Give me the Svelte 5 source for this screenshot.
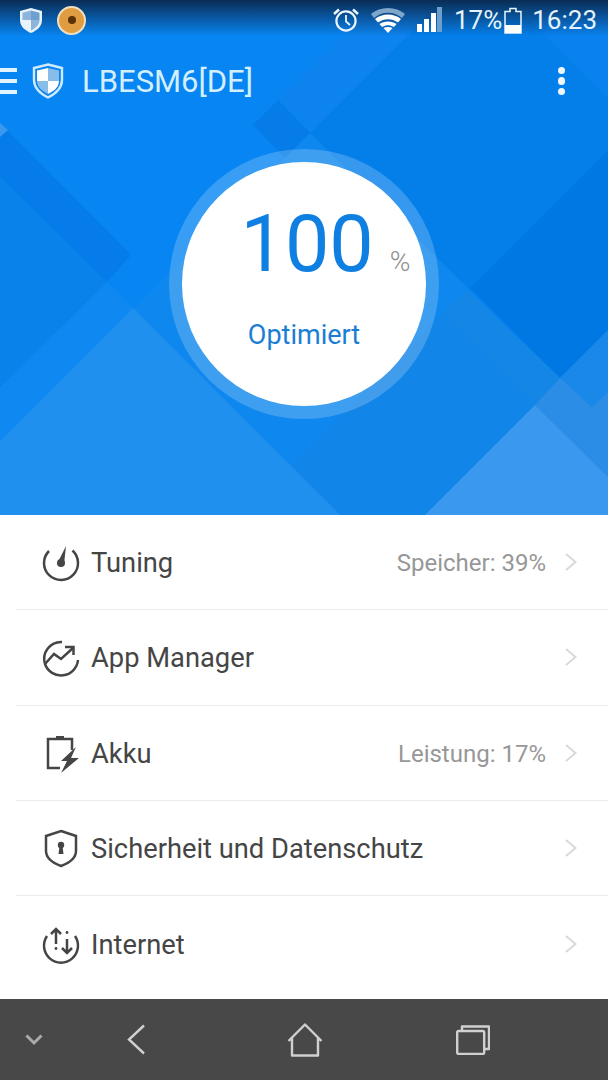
<script>
  const rows = [
    { icon: 'tuning', label: 'Tuning', value: 'Speicher: 39%' },
    { icon: 'apps', label: 'App Manager', value: '' },
    { icon: 'battery', label: 'Akku', value: 'Leistung: 17%' },
    { icon: 'shield', label: 'Sicherheit und Datenschutz', value: '' },
    { icon: 'net', label: 'Internet', value: '' }
  ]

  // background facets of the hero, painted in order
  const facets = [
    ['310,133 443,0 608,0 608,330 560,378', '#047fea'],
    ['470,288 608,150 608,330 560,378', '#0078e3'],
    ['510,0 608,0 608,98', '#0982ef'],
    ['310,133 608,426 608,515 0,515 0,443', '#0e87ee'],
    ['468,290 560,378 535,405 443,313', '#1487e6'],
    ['443,313 535,405 425,515 242,515', '#1285e8'],
    ['289,465 240,515 340,515', '#188aeb'],
    ['133,308 340,515 0,515 0,441', '#2090ef'],
    ['0,387 107,282 133,308 0,441', '#0f89f1'],
    ['0,177 107,282 0,387', '#0983ea'],
    ['7,130 131,255 107,282 0,177 0,123', '#057cea'],
    ['0,123 8,130 0,137', '#3a98ee'],
    ['278,100 310,133 443,0 378,0', '#0c83ee'],
    ['253,125 278,100 310,133 285,158', '#057ce8'],
    ['560,378 608,330 608,392 592,407', '#1a88e8'],
    ['560,378 592,407 608,392 608,477 535,405', '#2b8de6'],
    ['535,405 608,477 608,515 425,515', '#3a98ee']
  ]
</script>

<div class="screen">
  <section class="hero">
    <svg class="facets" width="608" height="515" viewBox="0 0 608 515">
      {#each facets as facet}
        <polygon points={facet[0]} fill={facet[1]} />
      {/each}
    </svg>
    <div class="shade"></div>

    <div class="status">
      <svg class="sShield" width="24" height="27" viewBox="0 0 24 27">
        <path d="M12 1 L23 4 V13 C23 20 17 24 12 26 C7 24 1 20 1 13 V4 Z" fill="#e6f3fb" />
        <path d="M12 3.500 L20.500 5.800 V13 H12 Z" fill="#6d9fd0" />
        <path d="M3.500 5.800 L12 3.500 V13 H3.500 Z" fill="#8db4da" />
        <path d="M3.500 13 H12 V23.500 C8 21.500 3.500 18 3.500 13 Z" fill="#eaf3fa" />
        <path d="M12 13 H20.500 C20.500 18 16 21.500 12 23.500 Z" fill="#8db4da" />
      </svg>
      <div class="coin"><span class="coinHole"></span></div>
      <div class="spacer"></div>
      <svg class="alarm" width="28" height="26" viewBox="0 0 28 26" fill="none" stroke="#eaf5fc">
        <circle cx="14" cy="14" r="9.6" stroke-width="2.2" />
        <path d="M14 8 V14.5 L18 18" stroke-width="1.8" />
        <path d="M2 7 L7 2.5 M26 7 L21 2.5" stroke-width="2.6" />
      </svg>
      <svg class="wifi" width="34" height="26" viewBox="0 0 34 26">
        <path d="M0 7 C9 -1 25 -1 34 7 L31 11 C23 4 11 4 3 11 Z" fill="#7fa5c8" />
        <path d="M4 12 C11 6 23 6 30 12 L27 15.500 C21 11 13 11 7 15.500 Z" fill="#fff" />
        <path d="M8.500 17 C13 13.500 21 13.500 25.500 17 L23 20 C19 17.500 15 17.500 11 20 Z" fill="#fff" />
        <path d="M12.500 21 C15 19.500 19 19.500 21.500 21 L17 26 Z" fill="#fff" />
      </svg>
      <svg class="signal" width="26" height="26" viewBox="0 0 26 26">
        <rect x="1" y="17" width="5" height="8" fill="#fff" />
        <rect x="8" y="12" width="5" height="13" fill="#fff" />
        <rect x="15" y="6" width="5" height="19" fill="#fff" />
        <rect x="21" y="0" width="5" height="25" fill="#6e9fcb" />
      </svg>
      <span class="pct">17%</span>
      <svg class="batt" width="18" height="27" viewBox="0 0 18 27">
        <path d="M1 4.500 H6 V1.500 H12 V4.500 H17 V26 H1 Z" fill="none" stroke="#eaf5fc" stroke-width="1.500" />
        <rect x="1" y="18" width="16" height="8" fill="#fff" />
      </svg>
      <span class="time">16:23</span>
    </div>

    <div class="toolbar">
      <div class="burger"><i></i><i></i><i></i></div>
      <svg class="tShield" width="32" height="36" viewBox="0 0 32 36">
        <path d="M16 1.500 L30 5 V17 C30 26 23 31 16 34.500 C9 31 2 26 2 17 V5 Z" fill="#0a84ee" stroke="#cdeaff" stroke-width="2.400" />
        <path d="M16 5 L27 7.500 V18 H16 Z" fill="#87bde8" />
        <path d="M5 18 H16 V31 C10 28 5 24 5 18 Z" fill="#87bde8" />
        <path d="M5 7.500 L16 5 V18 H5 Z" fill="#fff" />
        <path d="M16 18 H27 C27 24 22 28 16 31 Z" fill="#fff" />
      </svg>
      <span class="title">LBESM6[DE]</span>
      <div class="spacer"></div>
      <div class="dots"><i></i><i></i><i></i></div>
    </div>

    <div class="ring">
      <div class="disc">
        <div class="score"><span class="num">100</span><span class="unit">%</span></div>
        <div class="state">Optimiert</div>
      </div>
    </div>
  </section>

  <ul class="list">
    {#each rows as row}
      <li class="row">
        <svg class="rowIcon" width="40" height="40" viewBox="-20 -20 40 40" fill="none" stroke="#454545" stroke-width="2.500">
          {#if row.icon === 'tuning'}
            <path d="M-12 -12 A17 17 0 1 0 11.500 -12.500" />
            <circle cx="0" cy="0" r="4" fill="#454545" stroke="none" />
            <polygon points="-3,-1 3,1 5,-17" fill="#454545" stroke="none" />
          {:else if row.icon === 'apps'}
            <path d="M1 -16 A17 17 0 0 0 -16 6 A17 17 0 0 0 17 2" />
            <path d="M-16 6 L-7 -4 L0 1 L12 -10" />
            <path d="M4 -11 H12.500 V-3" />
          {:else if row.icon === 'battery'}
            <path d="M11 -4 V-15 H-13 V14 H-1" />
            <rect x="-5" y="-18" width="8" height="3" fill="#454545" stroke="none" />
            <polygon points="15,-7 0,7 6,7 0,19 18,4 10,4" fill="#454545" stroke="none" />
          {:else if row.icon === 'shield'}
            <path d="M0 -18 L15 -13 V2 C15 9 8 14 0 17 C-8 14 -15 9 -15 2 V-13 Z" />
            <circle cx="0" cy="-4" r="3.200" fill="#454545" stroke="none" />
            <polygon points="-1.500,-3 1.500,-3 2.500,5 -2.500,5" fill="#454545" stroke="none" />
          {:else}
            <path d="M-14 -9 A17 17 0 1 0 14 -9" />
            <path d="M-5 -1 V-16 M-10 -11 L-5 -16 L0 -11" />
            <path d="M6 -6 V8 M1 3 L6 8 L11 3" />
            <circle cx="-5" cy="3.500" r="1.400" fill="#454545" stroke="none" />
            <circle cx="6" cy="-12.500" r="1.400" fill="#454545" stroke="none" />
          {/if}
        </svg>
        <span class="label">{row.label}</span>
        {#if row.value}<span class="value">{row.value}</span>{/if}
        <svg class="chev" width="12" height="18" viewBox="0 0 12 18" fill="none" stroke="#d9d9d9" stroke-width="2">
          <path d="M1 1 L10.500 9 L1 17" />
        </svg>
      </li>
    {/each}
  </ul>

  <nav class="nav">
    <svg class="navDown" width="18" height="12" viewBox="0 0 18 12" fill="none" stroke="#aaa" stroke-width="3">
      <path d="M1.500 1.500 L9 9 L16.500 1.500" />
    </svg>
    <svg class="navBack" width="20" height="31" viewBox="0 0 20 31" fill="none" stroke="#d0d0d0" stroke-width="2.400">
      <path d="M18 1.500 L3 15.500 L18 29.500" />
    </svg>
    <svg class="navHome" width="36" height="34" viewBox="0 0 36 34" fill="none" stroke="#d0d0d0" stroke-width="2.400" stroke-linejoin="round">
      <path d="M1.500 18 L18 1.500 L34.500 18 M5 15 V32.500 H31 V15" />
    </svg>
    <svg class="navTabs" width="34" height="30" viewBox="0 0 34 30" fill="none" stroke="#d0d0d0" stroke-width="2.400" stroke-linejoin="round">
      <rect x="1.200" y="6" width="27" height="23" rx="1.500" />
      <path d="M6 6 V1.500 H33 V24 H28" />
    </svg>
  </nav>
</div>

<style>
  :global(body) {
    background: #fff;
  }

  .screen {
    width: 608px;
    height: 1080px;
    display: flex;
    flex-direction: column;
    overflow: hidden;
    font-family: Roboto, 'Liberation Sans', sans-serif;
  }

  .hero {
    position: relative;
    height: 515px;
    flex: none;
    display: flex;
    flex-direction: column;
    align-items: center;
    background: #0785f2;
    overflow: hidden;
  }

  .facets {
    position: absolute;
    left: 0;
    top: 0;
  }

  .shade {
    position: absolute;
    left: 0;
    top: 0;
    width: 100%;
    height: 36px;
    background: linear-gradient(#0a2c54, rgba(10, 60, 120, 0));
  }

  .status,
  .toolbar,
  .ring {
    position: relative;
  }

  .status {
    width: 100%;
    height: 40px;
    display: flex;
    align-items: center;
    color: #e4f3fc;
    font-size: 26px;
    box-sizing: border-box;
    padding: 0 11px 0 19px;
  }

  .spacer {
    flex: 1;
  }

  .coin {
    width: 29px;
    height: 29px;
    margin-left: 14px;
    border-radius: 50%;
    box-sizing: border-box;
    border: 2px solid #f0e0c0;
    background: #e09c40;
    display: flex;
    align-items: center;
    justify-content: center;
  }

  .coinHole {
    width: 8px;
    height: 8px;
    border-radius: 50%;
    background: #5a3208;
  }

  .wifi {
    margin-left: 11px;
  }

  .signal {
    margin-left: 11px;
  }

  .pct {
    margin-left: 12px;
  }

  .batt {
    margin-left: 2px;
  }

  .time {
    margin-left: 10px;
  }

  .toolbar {
    width: 100%;
    height: 82px;
    display: flex;
    align-items: center;
    box-sizing: border-box;
    padding-right: 43px;
  }

  .burger {
    width: 17px;
    display: flex;
    flex-direction: column;
    gap: 7px;
  }

  .burger i {
    height: 4px;
    background: #e2f3fd;
  }

  .tShield {
    margin-left: 15px;
  }

  .title {
    margin-left: 18px;
    font-size: 31px;
    color: #d3effe;
  }

  .dots {
    display: flex;
    flex-direction: column;
    gap: 3px;
  }

  .dots i {
    width: 7.500px;
    height: 7.500px;
    border-radius: 50%;
    background: #f0f8fd;
  }

  .ring {
    width: 270px;
    height: 270px;
    margin-top: 27px;
    box-sizing: border-box;
    padding: 13px;
    border-radius: 50%;
    background: rgba(255, 255, 255, 0.2);
  }

  .disc {
    height: 100%;
    border-radius: 50%;
    background: #fff;
    display: flex;
    flex-direction: column;
    align-items: center;
  }

  .score {
    margin-top: 34px;
    padding-left: 43px;
    display: flex;
    align-items: baseline;
  }

  .num {
    font-size: 79px;
    line-height: 96px;
    color: #0f80e2;
  }

  .unit {
    margin-left: 16px;
    font-size: 28px;
    font-weight: 300;
    color: #8e8e8e;
  }

  .state {
    margin-top: 27px;
    font-size: 27px;
    color: #1a7ed4;
  }

  .list {
    flex: 1;
    margin: 0;
    padding: 0;
    list-style: none;
    background: #fff;
  }

  .row {
    height: 95.300px;
    margin-left: 16px;
    box-sizing: border-box;
    display: flex;
    align-items: center;
    padding: 0 31px 0 25px;
    border-bottom: 1.500px solid #ebebeb;
  }

  .row:last-child {
    border-bottom: 0;
  }

  .rowIcon {
    margin-top: 2px;
  }

  .label {
    flex: 1;
    margin: 2px 0 0 10px;
    font-size: 27.300px;
    color: #454545;
  }

  .value {
    margin-top: 2px;
    font-size: 24px;
    color: #979797;
  }

  .chev {
    margin-left: 19px;
  }

  .nav {
    height: 81px;
    flex: none;
    background: #484848;
    display: flex;
    align-items: center;
  }

  .navDown {
    margin-left: 25px;
  }

  .navBack {
    margin-left: 83px;
  }

  .navHome {
    margin-left: 141px;
  }

  .navTabs {
    margin-left: 133px;
  }
</style>
